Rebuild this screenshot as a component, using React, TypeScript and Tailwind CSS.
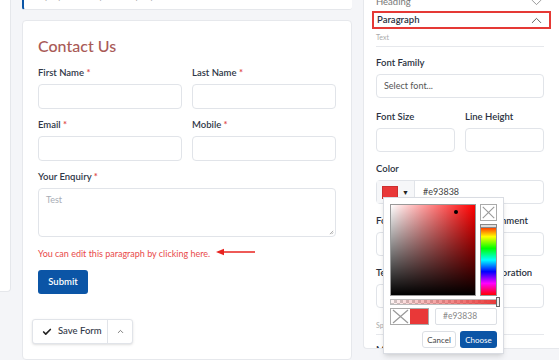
import React from "react";
import { Check, ChevronDown, ChevronUp } from "lucide-react";

function Label({ text }: { text: string }) {
  return (
    <div className="h-[10px] text-[9.5px] font-semibold text-[#2f3747] leading-[10px] mb-[6px] whitespace-nowrap">
      {text}
      <span className="text-[#e04848]"> *</span>
    </div>
  );
}

function Field({ label }: { label: string }) {
  return (
    <div className="flex-1">
      <Label text={label} />
      <div className="h-[25px] border border-[#e1e4e9] rounded-[4px] bg-white" />
    </div>
  );
}

function SideLabel({ text }: { text: string }) {
  return (
    <div className="h-[10px] text-[9.5px] font-semibold text-[#2a3140] leading-[10px] mb-[6px] whitespace-nowrap">
      {text}
    </div>
  );
}

function SideBox() {
  return <div className="h-[24px] border border-[#e1e4e9] rounded-[4px]" />;
}

function ColorPopup() {
  return (
    <div className="absolute left-[20px] top-[197px] w-[121px] h-[157px] bg-white border border-[#d9dce2] shadow-md px-[6px] pt-[6px]">
      <div className="flex gap-[4px]">
        <div className="relative w-[87px] h-[92px] bg-[#ff0000] border border-[#999]">
          <div className="absolute inset-0 bg-[linear-gradient(to_right,#fff,rgba(255,255,255,0))]" />
          <div className="absolute inset-0 bg-[linear-gradient(to_bottom,rgba(0,0,0,0),#000)]" />
          <div className="absolute left-[63px] top-[5px] w-[4px] h-[4px] rounded-full bg-black" />
        </div>
        <div className="flex flex-col gap-[3px]">
          <div className="w-[17px] h-[17px] border border-[#aaa] bg-white">
            <svg viewBox="0 0 17 17" className="w-full h-full">
              <path d="M2 2L15 15M15 2L2 15" stroke="#999" strokeWidth="1.2" />
            </svg>
          </div>
          <div className="relative w-[17px] h-[72px] border border-[#999] bg-[linear-gradient(to_bottom,#f00,#ff0,#0f0,#0ff,#00f,#f0f,#f00)]">
            <div className="absolute -left-[1px] -right-[1px] -top-[1px] h-[4px] border border-[#888] bg-[#ddd]" />
          </div>
        </div>
      </div>
      <div className="relative mt-[3px] h-[6px] w-[108px] border border-[#bbb] bg-[image:linear-gradient(to_right,rgba(233,56,56,0.05),#e93838),repeating-conic-gradient(#ccc_0_25%,#fff_0_50%)] bg-[length:100%_100%,6px_6px]">
        <div className="absolute -right-[3px] -top-[3px] w-[4px] h-[10px] border border-[#666] bg-[#eee]" />
      </div>
      <div className="flex items-center gap-[6px] mt-[3px]">
        <div className="flex w-[39px] h-[17px] border border-[#aaa]">
          <div className="w-[19px] h-full bg-white">
            <svg viewBox="0 0 19 15" className="w-full h-full">
              <path d="M2 1L17 14M17 1L2 14" stroke="#999" strokeWidth="1.2" />
            </svg>
          </div>
          <div className="flex-1 bg-[#e93838]" />
        </div>
        <div className="flex-1 h-[17px] border border-[#dcdfe4] rounded-[2px] text-[8.5px] text-[#888] flex items-center pl-[7px]">
          #e93838
        </div>
      </div>
      <div className="flex justify-end gap-[4px] mt-[6px]">
        <div className="h-[17px] w-[34px] border border-[#dcdfe4] rounded-[3px] text-[8px] text-[#444] flex items-center justify-center">
          Cancel
        </div>
        <div className="h-[17px] w-[37px] rounded-[3px] bg-[#0b55a6] text-[8px] text-white flex items-center justify-center">
          Choose
        </div>
      </div>
    </div>
  );
}

export default function App() {
  return (
    <div className="w-[559px] h-[360px] overflow-hidden bg-[#f4f5f8] flex font-['Lato','Noto_Sans',sans-serif]">
      <div className="w-[11px] h-[292px] shrink-0 bg-white border-r border-b border-[#e5e7eb] rounded-br-[4px]" />

      <div className="w-[330px] shrink-0 ml-[11px] flex flex-col">
        <div className="h-[10px] shrink-0 bg-white border-l-[2px] border-l-[#0b55a6] border-b border-b-[#e5e7eb] rounded-b-[3px] overflow-hidden">
          <div className="pl-[8px] -mt-[9px] text-[9px] leading-[10px] text-[#aaa] whitespace-nowrap">
            Enquiry form for your company
          </div>
        </div>
        <div className="mt-[10px] flex-1 bg-white border border-[#e6e8ec] rounded-[4px] px-[15px] pt-[17px]">
          <div className="text-[16px] text-[#a95a57] leading-none h-[16px] font-medium">Contact Us</div>
          <div className="flex gap-[10px] mt-[14px]">
            <Field label="First Name" />
            <Field label="Last Name" />
          </div>
          <div className="flex gap-[10px] mt-[11px]">
            <Field label="Email" />
            <Field label="Mobile" />
          </div>
          <div className="mt-[11px]">
            <Label text="Your Enquiry" />
            <div className="relative h-[49px] border border-[#e1e4e9] rounded-[4px] text-[9px] leading-[10px] text-[#a8adb5] pl-[7px] pt-[6px]">
              Test
              <svg viewBox="0 0 6 6" className="absolute right-[1px] bottom-[1px] w-[5px] h-[5px]">
                <path d="M1 5L5 1M3 5L5 3" stroke="#888" strokeWidth="0.8" />
              </svg>
            </div>
          </div>
          <div className="flex items-center mt-[12px] h-[10px]">
            <span className="text-[9px] leading-[10px] text-[#e94a4a] whitespace-nowrap">
              You can edit this paragraph by clicking here.
            </span>
            <svg viewBox="0 0 40 8" className="ml-[6px] w-[40px] h-[8px] -mt-[4px]">
              <path d="M39 4H6" stroke="#e8231f" strokeWidth="1.5" />
              <path d="M0 4L8 0.8V7.2Z" fill="#e8231f" />
            </svg>
          </div>
          <div className="mt-[11px] w-[50px] h-[24px] rounded-[3px] bg-[#0b55a6] text-white text-[9.5px] font-semibold flex items-center justify-center">
            Submit
          </div>
          <div className="-ml-[6px] mt-[25px] flex w-[101px] h-[25px] border border-[#e1e4e9] rounded-[3px] bg-white shadow-sm">
            <div className="flex items-center gap-[6px] pl-[9px] w-[75px] border-r border-[#e1e4e9] text-[9.5px] font-medium text-[#2f3747] whitespace-nowrap">
              <Check size={10} strokeWidth={4} className="text-[#222]" />
              Save Form
            </div>
            <div className="flex-1 flex items-center justify-center">
              <ChevronUp size={9} strokeWidth={2} className="text-[#555]" />
            </div>
          </div>
        </div>
      </div>

      <div className="relative w-[196px] shrink-0 ml-[11px] h-[349px]">
        <div className="h-full bg-white border-l border-b border-[#e6e8ec] rounded-bl-[4px] overflow-hidden">
          <div className="flex items-center justify-between pl-[12px] pr-[14px] -mt-[4px] h-[12px] text-[9.5px] leading-[10px] text-[#777]">
            <span>Heading</span>
            <ChevronDown size={17} strokeWidth={1.2} className="text-[#888]" />
          </div>
          <div className="ml-[8px] mr-[8px] mt-[3px] h-[18px] border-[2px] border-[#e53935] flex items-center justify-between pl-[3px] pr-[4px]">
            <span className="text-[9.5px] leading-[10px] font-semibold text-[#2a3140]">Paragraph</span>
            <ChevronUp size={17} strokeWidth={1.3} className="text-[#555]" />
          </div>
          <div className="pl-[12px] pr-[15px]">
            <div className="text-[7px] leading-[8px] h-[8px] text-[#aaa] mt-[4px]">Text</div>
            <div className="border-t border-[#e6e8ec] mt-[5px]" />
            <div className="mt-[11px]">
              <SideLabel text="Font Family" />
              <div className="h-[24px] border border-[#e1e4e9] rounded-[4px] flex items-center pl-[7px] text-[9px] text-[#555]">
                Select font...
              </div>
            </div>
            <div className="flex gap-[10px] mt-[14px]">
              <div className="flex-1">
                <SideLabel text="Font Size" />
                <SideBox />
              </div>
              <div className="flex-1">
                <SideLabel text="Line Height" />
                <SideBox />
              </div>
            </div>
            <div className="mt-[12px]">
              <SideLabel text="Color" />
              <div className="h-[24px] border border-[#e1e4e9] rounded-[4px] flex">
                <div className="w-[38px] flex items-center pl-[5px] gap-[4px] bg-[#f6f7f9] border-r border-[#e1e4e9]">
                  <div className="w-[16px] h-[13px] bg-[#e93838] border border-[#cc3030]" />
                  <span className="text-[7px] text-[#222]">▼</span>
                </div>
                <div className="flex items-center pl-[8px] text-[9px] text-[#444]">#e93838</div>
              </div>
            </div>
            <div className="flex gap-[10px] mt-[12px]">
              <div className="flex-1">
                <SideLabel text="Font Weight" />
                <SideBox />
              </div>
              <div className="flex-1">
                <SideLabel text="Text Alignment" />
                <SideBox />
              </div>
            </div>
            <div className="flex gap-[10px] mt-[12px]">
              <div className="flex-1">
                <SideLabel text="Text Transform" />
                <SideBox />
              </div>
              <div className="flex-1">
                <SideLabel text="Text Decoration" />
                <SideBox />
              </div>
            </div>
            <div className="text-[7px] leading-[8px] h-[8px] text-[#aaa] mt-[13px]">Spacing</div>
            <div className="border-t border-[#e6e8ec] mt-[5px]" />
            <div className="text-[9.5px] leading-[10px] font-semibold text-[#2a3140] mt-[10px]">Margin</div>
          </div>
        </div>
        <ColorPopup />
      </div>
    </div>
  );
}
